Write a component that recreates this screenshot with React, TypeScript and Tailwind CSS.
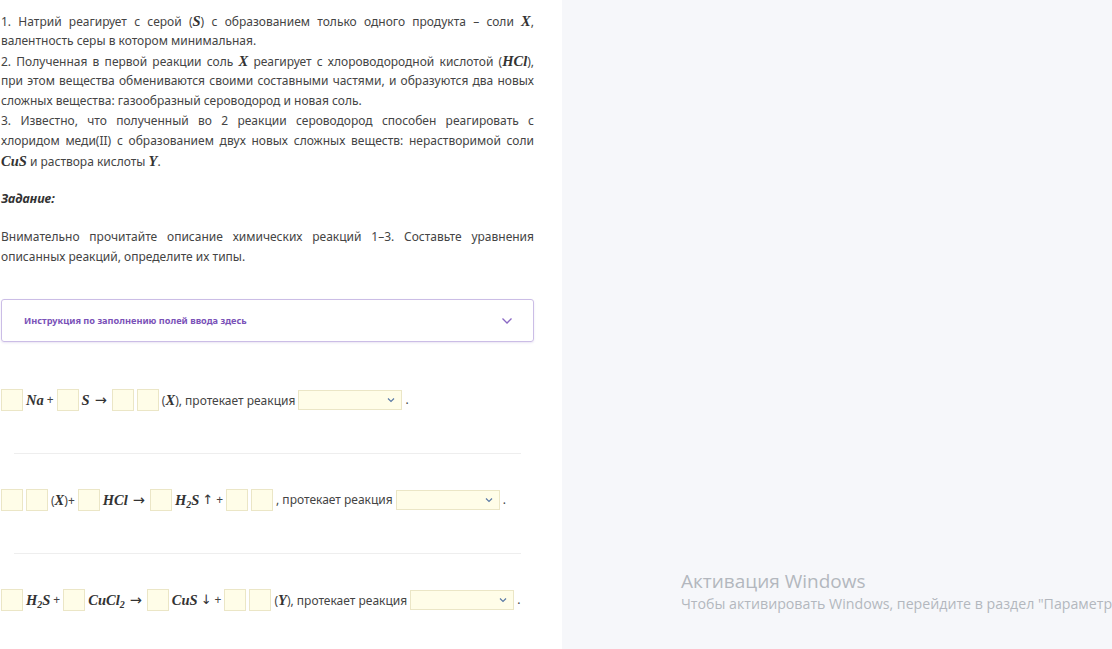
import React from 'react';

const M = ({ children }: { children: React.ReactNode }) => (
  <span className="font-['Liberation_Serif',serif] text-[14.5px] font-bold italic text-[#333]">{children}</span>
);

// relation arrow with a little space round it
const Op = ({ children }: { children: React.ReactNode }) => (
  <span className="px-[2px] font-['DejaVu_Sans',sans-serif] text-[14.5px] text-[#333]">{children}</span>
);

// gas / precipitate arrows
const Vert = ({ children }: { children: React.ReactNode }) => (
  <span className="font-['DejaVu_Sans',sans-serif] text-[13px] text-[#333]">{children}</span>
);

const Box = () => <span className="inline-block h-[22px] w-[22px] shrink-0 border border-[#ebe6c6] bg-[#fffde8]" />;

const Select = () => (
  <span className="flex h-[20px] w-[104px] shrink-0 items-center justify-end border border-[#ebe6c6] bg-[#fffde8] pr-[6px]">
    <svg width="8" height="6" viewBox="0 0 8 6" fill="none">
      <polyline points="1,1.5 4,4.5 7,1.5" stroke="#5b7aa6" strokeWidth="1.2" />
    </svg>
  </span>
);

const Row = ({ children }: { children: React.ReactNode }) => (
  <div className="flex h-[22px] items-center gap-[3px] pl-px text-[12px] leading-[22px] text-[#444]">{children}</div>
);

// justified line (every line but the last of a paragraph)
const J = ({ children }: { children: React.ReactNode }) => (
  <div className="h-[20px] text-justify [text-align-last:justify]">{children}</div>
);
const L = ({ children }: { children: React.ReactNode }) => <div className="h-[20px]">{children}</div>;

export default function App() {
  return (
    <div className="relative flex h-[649px] w-[1112px] overflow-hidden bg-[#f6f7fa] font-['Noto_Sans',sans-serif]">
      <div className="w-[562px] shrink-0 bg-white pt-[11px]">
        <div className="w-[534px] pl-px text-[12px] leading-[20px] text-[#444]">
          <J>1. Натрий реагирует с серой (<M>S</M>) с образованием только одного продукта – соли <M>X</M>,</J>
          <L>валентность серы в котором минимальная.</L>
          <J>2. Полученная в первой реакции соль <M>X</M> реагирует с хлороводородной кислотой (<M>HCl</M>),</J>
          <J>при этом вещества обмениваются своими составными частями, и образуются два новых</J>
          <L>сложных вещества: газообразный сероводород и новая соль.</L>
          <J>3. Известно, что полученный во 2 реакции сероводород способен реагировать с</J>
          <J>хлоридом меди(II) с образованием двух новых сложных веществ: нерастворимой соли</J>
          <L><M>CuS</M> и раствора кислоты <M>Y</M>.</L>
          <p className="mt-[18px] text-[12.5px] font-bold italic text-[#333]">Задание:</p>
          <div className="mt-[18px]">
            <J>Внимательно прочитайте описание химических реакций 1–3. Составьте уравнения</J>
            <L>описанных реакций, определите их типы.</L>
          </div>
        </div>

        <div className="ml-px mt-[32px] flex h-[43px] w-[533px] items-center justify-between rounded-[3px] border border-[#cbbde6] pl-[22px] pr-[20px] shadow-[0_1px_2px_rgba(120,90,180,0.15)]">
          <span className="text-[9.2px] font-bold text-[#7a52b8]">Инструкция по заполнению полей ввода здесь</span>
          <svg width="12" height="8" viewBox="0 0 12 8" fill="none">
            <polyline points="1.5,1.5 6,6 10.5,1.5" stroke="#8a68c4" strokeWidth="1.3" />
          </svg>
        </div>

        <div className="mt-[47px]">
          <Row>
            <Box /><M>Na</M><span>+</span><Box /><M>S</M><Op>→</Op><Box /><Box />
            <span>(<M>X</M>), протекает реакция</span><Select /><span>.</span>
          </Row>
          <div className="mb-[35px] ml-[14px] mt-[42px] h-px w-[507px] bg-[#eeeeee]" />
          <Row>
            <Box /><Box /><span>(<M>X</M>)+</span><Box /><M>HCl</M><Op>→</Op><Box />
            <M>H<sub className="text-[10px]">2</sub>S</M><Vert>↑</Vert><span>+</span><Box /><Box />
            <span>, протекает реакция</span><Select /><span>.</span>
          </Row>
          <div className="mb-[35px] ml-[14px] mt-[42px] h-px w-[507px] bg-[#eeeeee]" />
          <Row>
            <Box /><M>H<sub className="text-[10px]">2</sub>S</M><span>+</span><Box />
            <M>CuCl<sub className="text-[10px]">2</sub></M><Op>→</Op><Box /><M>CuS</M><Vert>↓</Vert><span>+</span>
            <Box /><Box /><span>(<M>Y</M>), протекает реакция</span><Select /><span>.</span>
          </Row>
        </div>
      </div>

      <div className="pointer-events-none absolute left-[681px] top-[569px] whitespace-nowrap font-['Open_Sans',sans-serif] text-[#b3b7be]">
        <div className="text-[19px] leading-[25px]">Активация Windows</div>
        <div className="text-[14.2px] leading-[20px]">Чтобы активировать Windows, перейдите в раздел "Параметры".</div>
      </div>
    </div>
  );
}
